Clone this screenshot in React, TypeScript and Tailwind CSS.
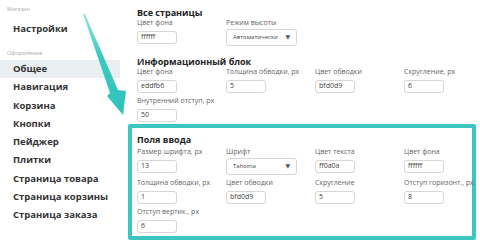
const font = { fontFamily: '"Open Sans", "DejaVu Sans", sans-serif' };

function Field({ label, value, wide }: { label: string; value: string; wide?: boolean }) {
  return (
    <div className="flex flex-col">
      <div className="text-[7px] leading-[8px] text-[#666] whitespace-nowrap">{label}</div>
      {wide ? (
        <div className="mt-[2px] w-[71px] h-[17px] border border-[#d6d6d6] rounded-[3px] bg-white flex items-center justify-between px-[6px] text-[6px] text-[#444]">
          <span>{value}</span>
          <span className="text-[6px] text-[#555]">▼</span>
        </div>
      ) : (
        <div className="mt-[4px] w-[40px] h-[13px] border border-[#d6d6d6] rounded-[3px] bg-white flex items-center px-[3px] text-[7px] text-[#444]">
          {value}
        </div>
      )}
    </div>
  );
}

const menu = ['Общее', 'Навигация', 'Корзина', 'Кнопки', 'Пейджер', 'Плитки', 'Страница товара', 'Страница корзины', 'Страница заказа'];

export default function App() {
  return (
    <div className="relative w-[480px] h-[242px] bg-white flex overflow-hidden" style={font}>
      {/* Sidebar */}
      <div className="w-[120px] shrink-0 flex flex-col">
        <div className="pl-[7px] pt-[6px] text-[5.5px] leading-[6px] text-[#aaa]">Магазин</div>
        <div className="pl-[13px] mt-[11px] text-[9.5px] leading-[12px] font-bold text-[#333]">Настройки</div>
        <div className="pl-[7px] mt-[15px] text-[5.5px] leading-[6px] text-[#aaa]">Оформление</div>
        <div className="mt-[4px] flex flex-col">
          {menu.map((m, i) => (
            <div
              key={m}
              className={`h-[18.25px] flex items-center pl-[13px] text-[9.5px] font-bold text-[#333] ${i === 0 ? 'bg-[#e9eef1]' : ''}`}
            >
              {m}
            </div>
          ))}
        </div>
      </div>

      {/* Main */}
      <div className="ml-[8px] flex-1 flex flex-col">
        <div className="pl-[9px] pt-[8px]">
          <div className="text-[9px] leading-[10px] font-bold text-[#222]">Все страницы</div>
          <div className="mt-[1px] grid grid-cols-[89px_89px_89px_89px] items-start">
            <Field label="Цвет фона" value="ffffff" />
            <Field label="Режим высоты" value="Автоматически" wide />
          </div>
        </div>

        <div className="pl-[9px] mt-[11px]">
          <div className="text-[9px] leading-[10px] font-bold text-[#222]">Информационный блок</div>
          <div className="mt-[1px] grid grid-cols-[89px_89px_89px_89px]">
            <Field label="Цвет фона" value="eddfb6" />
            <Field label="Толщина обводки, px" value="5" />
            <Field label="Цвет обводки" value="bfd0d9" />
            <Field label="Скругление, px" value="6" />
          </div>
          <div className="mt-[4px]">
            <Field label="Внутренний отступ, px" value="50" />
          </div>
        </div>

        <div className="mt-[2px] w-[348px] h-[116px] border-[4px] border-[#3cc6bd] rounded-[2px] pl-[5px] pt-[7px]">
          <div className="text-[9px] leading-[10px] font-bold text-[#222]">Поля ввода</div>
          <div className="mt-[3px] grid grid-cols-[89px_89px_89px_89px] items-start">
            <Field label="Размер шрифта, px" value="13" />
            <Field label="Шрифт" value="Tahoma" wide />
            <Field label="Цвет текста" value="ff0a0a" />
            <Field label="Цвет фона" value="ffffff" />
          </div>
          <div className="mt-[4px] grid grid-cols-[89px_89px_89px_89px]">
            <Field label="Толщина обводки, px" value="1" />
            <Field label="Цвет обводки" value="bfd0d9" />
            <Field label="Скругление" value="5" />
            <Field label="Отступ горизонт., px" value="8" />
          </div>
          <div className="mt-[4px]">
            <Field label="Отступ вертик., px" value="6" />
          </div>
        </div>
      </div>

      {/* Arrow */}
      <svg className="absolute left-0 top-0 pointer-events-none" width="480" height="242" viewBox="0 0 480 242">
        <defs>
          <linearGradient id="ag" x1="84" y1="15" x2="123" y2="115" gradientUnits="userSpaceOnUse">
            <stop offset="0" stopColor="#62d8d2" stopOpacity="0.7" />
            <stop offset="0.4" stopColor="#3ccac0" />
            <stop offset="1" stopColor="#2fc3b9" />
          </linearGradient>
        </defs>
        <polygon
          points="83,14 85,14 118,90 126,91 123,115 107,96 110,93"
          fill="url(#ag)"
        />
      </svg>
    </div>
  );
}
